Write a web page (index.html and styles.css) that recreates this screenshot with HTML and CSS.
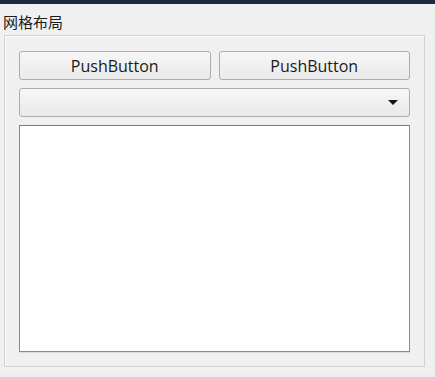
FILE: index.html
```html
<!DOCTYPE html>
<html lang="zh">
<head>
  <meta charset="UTF-8" />
  <title>网格布局</title>
  <link rel="stylesheet" href="styles.css">
</head>
<body>
  <div class="titlebar"></div>
  <div class="caption">网格布局</div>
  <div class="groupbox">
    <button class="push">PushButton</button>
    <button class="push">PushButton</button>
    <div class="combo"><span class="arrow"></span></div>
    <textarea class="editor"></textarea>
  </div>
  <div class="statusstrip"></div>
</body>
</html>
```

FILE: styles.css
```css
* {
  box-sizing: border-box;
  margin: 0;
  padding: 0;
}

body {
  width: 435px;
  height: 377px;
  overflow: hidden;
  background-color: #f0f0f0;
  font-family: 'Open Sans', 'Noto Sans CJK SC', sans-serif;
  color: #1a1a1a;
}

.titlebar {
  height: 4px;
  background-color: #1c2b40;
}

.caption {
  height: 31px;
  padding: 8px 0 0 3px;
  font-family: 'Noto Sans CJK SC', sans-serif;
  font-size: 15px;
  line-height: 20px;
  color: #1a1a1a;
}

.groupbox {
  margin-left: 4px;
  width: 421px;
  height: 332px;
  border: 1px solid #d2d2d2;
  box-shadow: inset 1px 1px 0 #fbfbfb;
  padding: 15px 14px 14px 14px;
  display: grid;
  grid-template-columns: 1fr 1fr;
  grid-template-rows: 29px 29px 1fr;
  column-gap: 8px;
  row-gap: 8px;
}

.push {
  border: 1px solid #adadad;
  border-radius: 3px;
  background: linear-gradient(#f7f7f7, #e9e9e9);
  font-family: 'Open Sans', sans-serif;
  font-size: 16px;
  color: #1a1a1a;
  padding-top: 1px;
}

.combo {
  grid-column: 1 / 3;
  border: 1px solid #adadad;
  border-radius: 3px;
  background: linear-gradient(#f7f7f7, #e9e9e9);
  display: flex;
  justify-content: flex-end;
  align-items: center;
  padding-right: 11px;
}

.arrow {
  width: 0;
  height: 0;
  border-left: 5px solid transparent;
  border-right: 5px solid transparent;
  border-top: 5px solid #151515;
}

.editor {
  grid-column: 1 / 3;
  resize: none;
  background-color: #ffffff;
  border: 1px solid #8a8a8a;
  border-top-color: #7c7c7c;
  box-shadow: 0 1px 0 #dcdcdc;
}

.statusstrip {
  margin-top: 8px;
  height: 2px;
  background-color: #e3eef8;
}
```
